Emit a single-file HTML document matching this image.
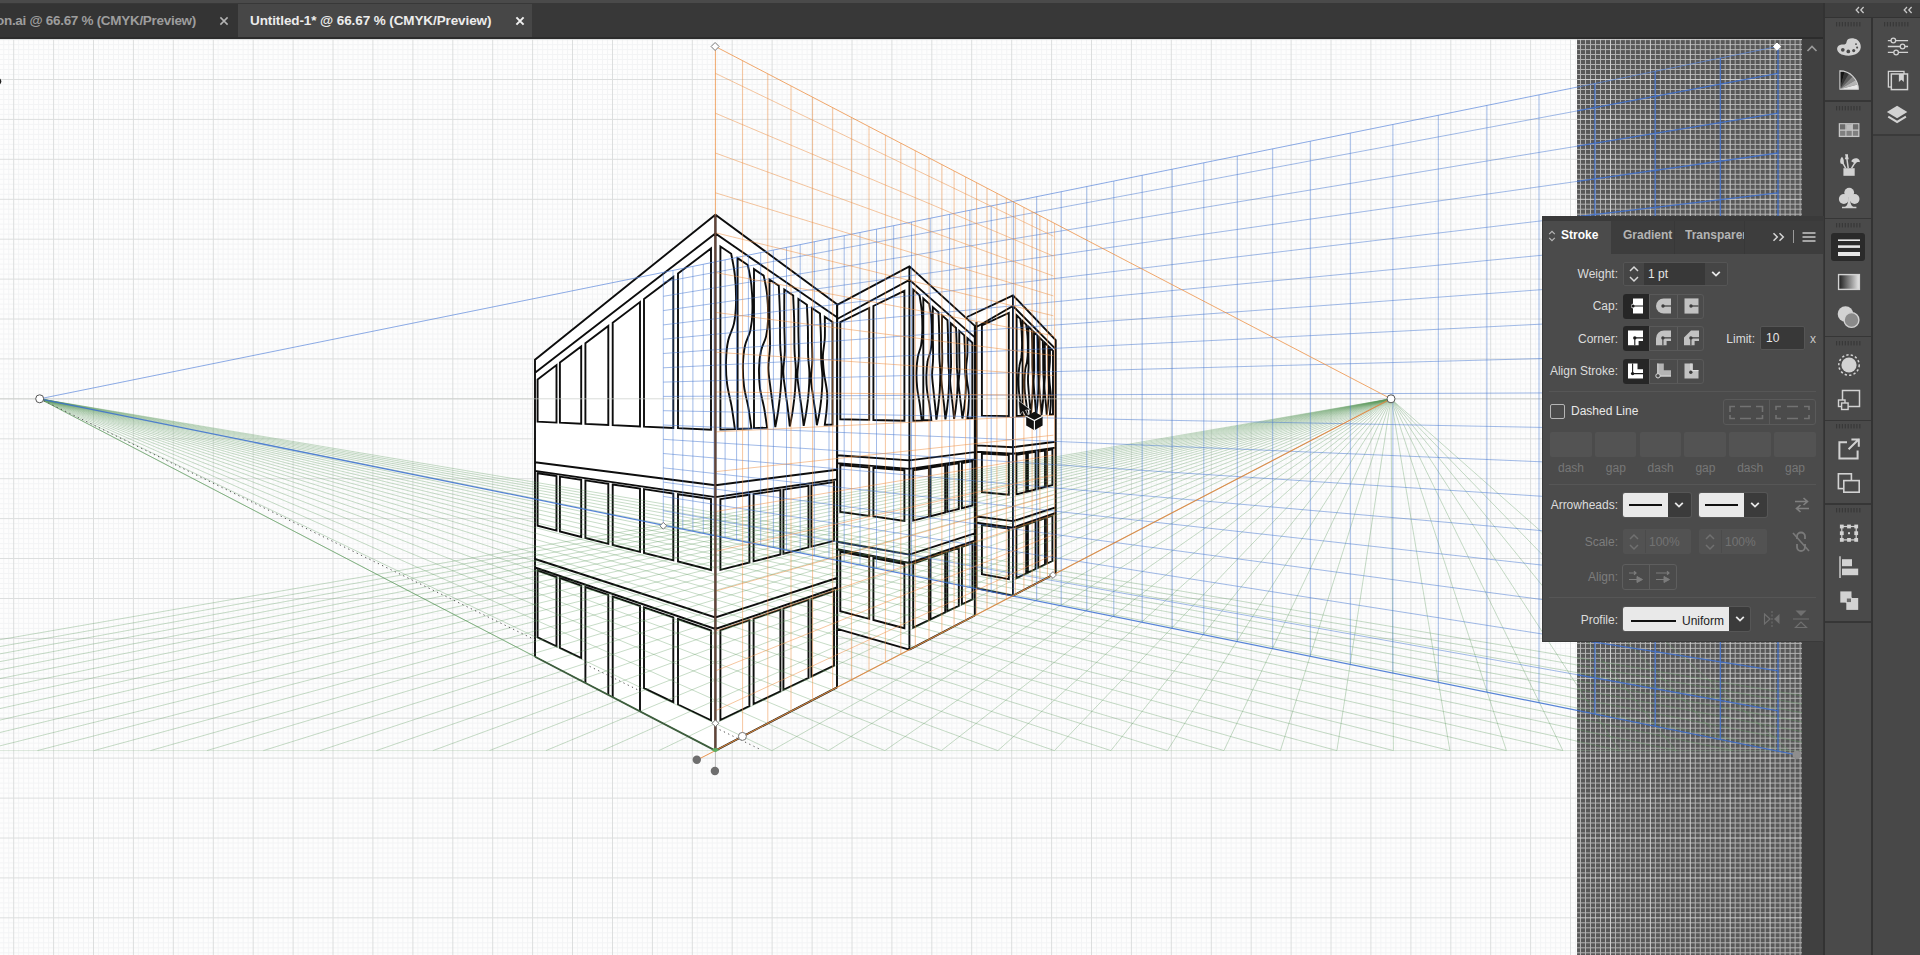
<!DOCTYPE html>
<html lang="en"><head><meta charset="utf-8"><title>Untitled-1* @ 66.67 % (CMYK/Preview)</title>
<style>
html,body{margin:0;padding:0}
body{width:1920px;height:955px;overflow:hidden;position:relative;background:#4a4a4a;
 font-family:"Liberation Sans",sans-serif;font-size:12px;color:#ddd}
.cv{position:absolute;left:0;top:0}
.abs{position:absolute}
.topbar{left:0;top:0;width:1823px;height:39px;background:#383838}
.topstrip{left:0;top:0;width:1920px;height:3px;background:#4a4a4a}
.tab{top:4px;height:33px;line-height:34px;font-weight:bold;font-size:13.5px;letter-spacing:-0.1px;white-space:nowrap}
.tab span{position:absolute;top:0}
.panel{left:1543px;top:217px;width:280px;height:424px;background:#4b4b4b;box-shadow:0 0 0 1px #3a3a3a;overflow:hidden}
.ptabs{left:0;top:0;width:280px;height:38px;background:#3d3d3d}
.ptab{top:5px;height:33px;line-height:29px;font-weight:bold;font-size:12px;white-space:nowrap}
.lbl{white-space:nowrap;text-align:right;width:121px;line-height:16px;height:16px;font-size:12px;color:#dcdcdc}
.dis{color:#7d7d7d}
.sep{left:6px;width:267px;height:1px;background:#565656}
.grp{border:1px solid #595959;border-radius:3px;box-sizing:border-box}
.fld{background:#3b3b3b;border:1px solid #555;box-sizing:border-box;border-radius:2px}
.dfld{background:#535353;border-radius:2px}
.dl{font-size:12px;color:#777;text-align:center;width:42px;line-height:14px}
.rcol{background:#4a4a4a}
</style></head><body>
<svg class="cv" width="1802" height="955" viewBox="0 0 1802 955">
<defs><clipPath id="ab"><rect x="0" y="39" width="1577.2" height="916"/></clipPath><clipPath id="pb"><rect x="1577.2" y="39" width="224.8" height="916"/></clipPath><clipPath id="cv"><rect x="0" y="39" width="1802" height="916"/></clipPath></defs>
<rect x="0" y="39" width="1577.2" height="916" fill="#fdfdfd"/>
<rect x="1577.2" y="39" width="224.8" height="916" fill="#585858"/>
<g clip-path="url(#ab)" fill="none"><path d="M3.7 39V955M8.7 39V955M18.6 39V955M23.6 39V955M28.6 39V955M33.6 39V955M38.6 39V955M43.6 39V955M48.6 39V955M58.6 39V955M63.6 39V955M68.5 39V955M73.5 39V955M78.5 39V955M83.5 39V955M88.5 39V955M98.5 39V955M103.5 39V955M108.5 39V955M113.5 39V955M118.5 39V955M123.4 39V955M128.4 39V955M138.4 39V955M143.4 39V955M148.4 39V955M153.4 39V955M158.4 39V955M163.4 39V955M168.4 39V955M178.3 39V955M183.3 39V955M188.3 39V955M193.3 39V955M198.3 39V955M203.3 39V955M208.3 39V955M218.2 39V955M223.2 39V955M228.2 39V955M233.2 39V955M238.2 39V955M243.2 39V955M248.2 39V955M258.2 39V955M263.2 39V955M268.1 39V955M273.1 39V955M278.1 39V955M283.1 39V955M288.1 39V955M298.1 39V955M303.1 39V955M308.1 39V955M313.1 39V955M318.1 39V955M323 39V955M328 39V955M338 39V955M343 39V955M348 39V955M353 39V955M358 39V955M363 39V955M367.9 39V955M377.9 39V955M382.9 39V955M387.9 39V955M392.9 39V955M397.9 39V955M402.9 39V955M407.9 39V955M417.9 39V955M422.8 39V955M427.8 39V955M432.8 39V955M437.8 39V955M442.8 39V955M447.8 39V955M457.8 39V955M462.8 39V955M467.8 39V955M472.7 39V955M477.7 39V955M482.7 39V955M487.7 39V955M497.7 39V955M502.7 39V955M507.7 39V955M512.7 39V955M517.7 39V955M522.6 39V955M527.6 39V955M537.6 39V955M542.6 39V955M547.6 39V955M552.6 39V955M557.6 39V955M562.6 39V955M567.5 39V955M577.5 39V955M582.5 39V955M587.5 39V955M592.5 39V955M597.5 39V955M602.5 39V955M607.5 39V955M617.5 39V955M622.4 39V955M627.4 39V955M632.4 39V955M637.4 39V955M642.4 39V955M647.4 39V955M657.4 39V955M662.4 39V955M667.4 39V955M672.3 39V955M677.3 39V955M682.3 39V955M687.3 39V955M697.3 39V955M702.3 39V955M707.3 39V955M712.3 39V955M717.2 39V955M722.2 39V955M727.2 39V955M737.2 39V955M742.2 39V955M747.2 39V955M752.2 39V955M757.2 39V955M762.2 39V955M767.1 39V955M777.1 39V955M782.1 39V955M787.1 39V955M792.1 39V955M797.1 39V955M802.1 39V955M807.1 39V955M817.1 39V955M822 39V955M827 39V955M832 39V955M837 39V955M842 39V955M847 39V955M857 39V955M862 39V955M867 39V955M871.9 39V955M876.9 39V955M881.9 39V955M886.9 39V955M896.9 39V955M901.9 39V955M906.9 39V955M911.9 39V955M916.9 39V955M921.8 39V955M926.8 39V955M936.8 39V955M941.8 39V955M946.8 39V955M951.8 39V955M956.8 39V955M961.8 39V955M966.8 39V955M976.7 39V955M981.7 39V955M986.7 39V955M991.7 39V955M996.7 39V955M1001.7 39V955M1006.7 39V955M1016.7 39V955M1021.6 39V955M1026.6 39V955M1031.6 39V955M1036.6 39V955M1041.6 39V955M1046.6 39V955M1056.6 39V955M1061.6 39V955M1066.6 39V955M1071.5 39V955M1076.5 39V955M1081.5 39V955M1086.5 39V955M1096.5 39V955M1101.5 39V955M1106.5 39V955M1111.5 39V955M1116.5 39V955M1121.4 39V955M1126.4 39V955M1136.4 39V955M1141.4 39V955M1146.4 39V955M1151.4 39V955M1156.4 39V955M1161.4 39V955M1166.4 39V955M1176.3 39V955M1181.3 39V955M1186.3 39V955M1191.3 39V955M1196.3 39V955M1201.3 39V955M1206.3 39V955M1216.2 39V955M1221.2 39V955M1226.2 39V955M1231.2 39V955M1236.2 39V955M1241.2 39V955M1246.2 39V955M1256.2 39V955M1261.2 39V955M1266.2 39V955M1271.1 39V955M1276.1 39V955M1281.1 39V955M1286.1 39V955M1296.1 39V955M1301.1 39V955M1306.1 39V955M1311.1 39V955M1316 39V955M1321 39V955M1326 39V955M1336 39V955M1341 39V955M1346 39V955M1351 39V955M1356 39V955M1361 39V955M1366 39V955M1375.9 39V955M1380.9 39V955M1385.9 39V955M1390.9 39V955M1395.9 39V955M1400.9 39V955M1405.9 39V955M1415.9 39V955M1420.8 39V955M1425.8 39V955M1430.8 39V955M1435.8 39V955M1440.8 39V955M1445.8 39V955M1455.8 39V955M1460.8 39V955M1465.8 39V955M1470.7 39V955M1475.7 39V955M1480.7 39V955M1485.7 39V955M1495.7 39V955M1500.7 39V955M1505.7 39V955M1510.7 39V955M1515.7 39V955M1520.6 39V955M1525.6 39V955M1535.6 39V955M1540.6 39V955M1545.6 39V955M1550.6 39V955M1555.6 39V955M1560.6 39V955M1565.5 39V955M1575.5 39V955M1580.5 39V955M1585.5 39V955M1590.5 39V955M1595.5 39V955M1600.5 39V955M1605.5 39V955M1615.5 39V955M1620.4 39V955M1625.4 39V955M1630.4 39V955M1635.4 39V955M1640.4 39V955M1645.4 39V955M1655.4 39V955M1660.4 39V955M1665.4 39V955M1670.3 39V955M1675.3 39V955M1680.3 39V955M1685.3 39V955M1695.3 39V955M1700.3 39V955M1705.3 39V955M1710.3 39V955M1715.2 39V955M1720.2 39V955M1725.2 39V955M1735.2 39V955M1740.2 39V955M1745.2 39V955M1750.2 39V955M1755.2 39V955M1760.2 39V955M1765.2 39V955M1775.1 39V955M1780.1 39V955M1785.1 39V955M1790.1 39V955M1795.1 39V955M1800.1 39V955M0 44.6H1802M0 49.6H1802M0 54.5H1802M0 59.5H1802M0 64.5H1802M0 69.5H1802M0 74.5H1802M0 84.5H1802M0 89.5H1802M0 94.5H1802M0 99.5H1802M0 104.5H1802M0 109.4H1802M0 114.4H1802M0 124.4H1802M0 129.4H1802M0 134.4H1802M0 139.4H1802M0 144.4H1802M0 149.4H1802M0 154.4H1802M0 164.3H1802M0 169.3H1802M0 174.3H1802M0 179.3H1802M0 184.3H1802M0 189.3H1802M0 194.3H1802M0 204.2H1802M0 209.2H1802M0 214.2H1802M0 219.2H1802M0 224.2H1802M0 229.2H1802M0 234.2H1802M0 244.2H1802M0 249.2H1802M0 254.2H1802M0 259.1H1802M0 264.1H1802M0 269.1H1802M0 274.1H1802M0 284.1H1802M0 289.1H1802M0 294.1H1802M0 299.1H1802M0 304.1H1802M0 309H1802M0 314H1802M0 324H1802M0 329H1802M0 334H1802M0 339H1802M0 344H1802M0 349H1802M0 353.9H1802M0 363.9H1802M0 368.9H1802M0 373.9H1802M0 378.9H1802M0 383.9H1802M0 388.9H1802M0 393.9H1802M0 403.9H1802M0 408.8H1802M0 413.8H1802M0 418.8H1802M0 423.8H1802M0 428.8H1802M0 433.8H1802M0 443.8H1802M0 448.8H1802M0 453.8H1802M0 458.7H1802M0 463.7H1802M0 468.7H1802M0 473.7H1802M0 483.7H1802M0 488.7H1802M0 493.7H1802M0 498.7H1802M0 503.7H1802M0 508.6H1802M0 513.6H1802M0 523.6H1802M0 528.6H1802M0 533.6H1802M0 538.6H1802M0 543.6H1802M0 548.6H1802M0 553.5H1802M0 563.5H1802M0 568.5H1802M0 573.5H1802M0 578.5H1802M0 583.5H1802M0 588.5H1802M0 593.5H1802M0 603.5H1802M0 608.4H1802M0 613.4H1802M0 618.4H1802M0 623.4H1802M0 628.4H1802M0 633.4H1802M0 643.4H1802M0 648.4H1802M0 653.4H1802M0 658.3H1802M0 663.3H1802M0 668.3H1802M0 673.3H1802M0 683.3H1802M0 688.3H1802M0 693.3H1802M0 698.3H1802M0 703.2H1802M0 708.2H1802M0 713.2H1802M0 723.2H1802M0 728.2H1802M0 733.2H1802M0 738.2H1802M0 743.2H1802M0 748.2H1802M0 753.1H1802M0 763.1H1802M0 768.1H1802M0 773.1H1802M0 778.1H1802M0 783.1H1802M0 788.1H1802M0 793.1H1802M0 803.1H1802M0 808H1802M0 813H1802M0 818H1802M0 823H1802M0 828H1802M0 833H1802M0 843H1802M0 848H1802M0 853H1802M0 857.9H1802M0 862.9H1802M0 867.9H1802M0 872.9H1802M0 882.9H1802M0 887.9H1802M0 892.9H1802M0 897.9H1802M0 902.9H1802M0 907.8H1802M0 912.8H1802M0 922.8H1802M0 927.8H1802M0 932.8H1802M0 937.8H1802M0 942.8H1802M0 947.8H1802M0 952.8H1802" stroke="#f3f4f5"/><path d="M13.7 39V955M53.6 39V955M93.5 39V955M133.4 39V955M173.3 39V955M213.3 39V955M253.2 39V955M293.1 39V955M333 39V955M372.9 39V955M412.9 39V955M452.8 39V955M492.7 39V955M532.6 39V955M572.5 39V955M612.5 39V955M652.4 39V955M692.3 39V955M732.2 39V955M772.1 39V955M812.1 39V955M852 39V955M891.9 39V955M931.8 39V955M971.7 39V955M1011.7 39V955M1051.6 39V955M1091.5 39V955M1131.4 39V955M1171.3 39V955M1211.3 39V955M1251.2 39V955M1291.1 39V955M1331 39V955M1370.9 39V955M1410.9 39V955M1450.8 39V955M1490.7 39V955M1530.6 39V955M1570.5 39V955M1610.5 39V955M1650.4 39V955M1690.3 39V955M1730.2 39V955M1770.1 39V955M0 39.6H1802M0 79.5H1802M0 119.4H1802M0 159.3H1802M0 199.3H1802M0 239.2H1802M0 279.1H1802M0 319H1802M0 358.9H1802M0 398.9H1802M0 438.8H1802M0 478.7H1802M0 518.6H1802M0 558.5H1802M0 598.5H1802M0 638.4H1802M0 678.3H1802M0 718.2H1802M0 758.1H1802M0 798.1H1802M0 838H1802M0 877.9H1802M0 917.8H1802" stroke="#dcdede"/></g>
<g clip-path="url(#pb)" fill="none"><path d="M3.7 39V955M8.7 39V955M18.6 39V955M23.6 39V955M28.6 39V955M33.6 39V955M38.6 39V955M43.6 39V955M48.6 39V955M58.6 39V955M63.6 39V955M68.5 39V955M73.5 39V955M78.5 39V955M83.5 39V955M88.5 39V955M98.5 39V955M103.5 39V955M108.5 39V955M113.5 39V955M118.5 39V955M123.4 39V955M128.4 39V955M138.4 39V955M143.4 39V955M148.4 39V955M153.4 39V955M158.4 39V955M163.4 39V955M168.4 39V955M178.3 39V955M183.3 39V955M188.3 39V955M193.3 39V955M198.3 39V955M203.3 39V955M208.3 39V955M218.2 39V955M223.2 39V955M228.2 39V955M233.2 39V955M238.2 39V955M243.2 39V955M248.2 39V955M258.2 39V955M263.2 39V955M268.1 39V955M273.1 39V955M278.1 39V955M283.1 39V955M288.1 39V955M298.1 39V955M303.1 39V955M308.1 39V955M313.1 39V955M318.1 39V955M323 39V955M328 39V955M338 39V955M343 39V955M348 39V955M353 39V955M358 39V955M363 39V955M367.9 39V955M377.9 39V955M382.9 39V955M387.9 39V955M392.9 39V955M397.9 39V955M402.9 39V955M407.9 39V955M417.9 39V955M422.8 39V955M427.8 39V955M432.8 39V955M437.8 39V955M442.8 39V955M447.8 39V955M457.8 39V955M462.8 39V955M467.8 39V955M472.7 39V955M477.7 39V955M482.7 39V955M487.7 39V955M497.7 39V955M502.7 39V955M507.7 39V955M512.7 39V955M517.7 39V955M522.6 39V955M527.6 39V955M537.6 39V955M542.6 39V955M547.6 39V955M552.6 39V955M557.6 39V955M562.6 39V955M567.5 39V955M577.5 39V955M582.5 39V955M587.5 39V955M592.5 39V955M597.5 39V955M602.5 39V955M607.5 39V955M617.5 39V955M622.4 39V955M627.4 39V955M632.4 39V955M637.4 39V955M642.4 39V955M647.4 39V955M657.4 39V955M662.4 39V955M667.4 39V955M672.3 39V955M677.3 39V955M682.3 39V955M687.3 39V955M697.3 39V955M702.3 39V955M707.3 39V955M712.3 39V955M717.2 39V955M722.2 39V955M727.2 39V955M737.2 39V955M742.2 39V955M747.2 39V955M752.2 39V955M757.2 39V955M762.2 39V955M767.1 39V955M777.1 39V955M782.1 39V955M787.1 39V955M792.1 39V955M797.1 39V955M802.1 39V955M807.1 39V955M817.1 39V955M822 39V955M827 39V955M832 39V955M837 39V955M842 39V955M847 39V955M857 39V955M862 39V955M867 39V955M871.9 39V955M876.9 39V955M881.9 39V955M886.9 39V955M896.9 39V955M901.9 39V955M906.9 39V955M911.9 39V955M916.9 39V955M921.8 39V955M926.8 39V955M936.8 39V955M941.8 39V955M946.8 39V955M951.8 39V955M956.8 39V955M961.8 39V955M966.8 39V955M976.7 39V955M981.7 39V955M986.7 39V955M991.7 39V955M996.7 39V955M1001.7 39V955M1006.7 39V955M1016.7 39V955M1021.6 39V955M1026.6 39V955M1031.6 39V955M1036.6 39V955M1041.6 39V955M1046.6 39V955M1056.6 39V955M1061.6 39V955M1066.6 39V955M1071.5 39V955M1076.5 39V955M1081.5 39V955M1086.5 39V955M1096.5 39V955M1101.5 39V955M1106.5 39V955M1111.5 39V955M1116.5 39V955M1121.4 39V955M1126.4 39V955M1136.4 39V955M1141.4 39V955M1146.4 39V955M1151.4 39V955M1156.4 39V955M1161.4 39V955M1166.4 39V955M1176.3 39V955M1181.3 39V955M1186.3 39V955M1191.3 39V955M1196.3 39V955M1201.3 39V955M1206.3 39V955M1216.2 39V955M1221.2 39V955M1226.2 39V955M1231.2 39V955M1236.2 39V955M1241.2 39V955M1246.2 39V955M1256.2 39V955M1261.2 39V955M1266.2 39V955M1271.1 39V955M1276.1 39V955M1281.1 39V955M1286.1 39V955M1296.1 39V955M1301.1 39V955M1306.1 39V955M1311.1 39V955M1316 39V955M1321 39V955M1326 39V955M1336 39V955M1341 39V955M1346 39V955M1351 39V955M1356 39V955M1361 39V955M1366 39V955M1375.9 39V955M1380.9 39V955M1385.9 39V955M1390.9 39V955M1395.9 39V955M1400.9 39V955M1405.9 39V955M1415.9 39V955M1420.8 39V955M1425.8 39V955M1430.8 39V955M1435.8 39V955M1440.8 39V955M1445.8 39V955M1455.8 39V955M1460.8 39V955M1465.8 39V955M1470.7 39V955M1475.7 39V955M1480.7 39V955M1485.7 39V955M1495.7 39V955M1500.7 39V955M1505.7 39V955M1510.7 39V955M1515.7 39V955M1520.6 39V955M1525.6 39V955M1535.6 39V955M1540.6 39V955M1545.6 39V955M1550.6 39V955M1555.6 39V955M1560.6 39V955M1565.5 39V955M1575.5 39V955M1580.5 39V955M1585.5 39V955M1590.5 39V955M1595.5 39V955M1600.5 39V955M1605.5 39V955M1615.5 39V955M1620.4 39V955M1625.4 39V955M1630.4 39V955M1635.4 39V955M1640.4 39V955M1645.4 39V955M1655.4 39V955M1660.4 39V955M1665.4 39V955M1670.3 39V955M1675.3 39V955M1680.3 39V955M1685.3 39V955M1695.3 39V955M1700.3 39V955M1705.3 39V955M1710.3 39V955M1715.2 39V955M1720.2 39V955M1725.2 39V955M1735.2 39V955M1740.2 39V955M1745.2 39V955M1750.2 39V955M1755.2 39V955M1760.2 39V955M1765.2 39V955M1775.1 39V955M1780.1 39V955M1785.1 39V955M1790.1 39V955M1795.1 39V955M1800.1 39V955M0 44.6H1802M0 49.6H1802M0 54.5H1802M0 59.5H1802M0 64.5H1802M0 69.5H1802M0 74.5H1802M0 84.5H1802M0 89.5H1802M0 94.5H1802M0 99.5H1802M0 104.5H1802M0 109.4H1802M0 114.4H1802M0 124.4H1802M0 129.4H1802M0 134.4H1802M0 139.4H1802M0 144.4H1802M0 149.4H1802M0 154.4H1802M0 164.3H1802M0 169.3H1802M0 174.3H1802M0 179.3H1802M0 184.3H1802M0 189.3H1802M0 194.3H1802M0 204.2H1802M0 209.2H1802M0 214.2H1802M0 219.2H1802M0 224.2H1802M0 229.2H1802M0 234.2H1802M0 244.2H1802M0 249.2H1802M0 254.2H1802M0 259.1H1802M0 264.1H1802M0 269.1H1802M0 274.1H1802M0 284.1H1802M0 289.1H1802M0 294.1H1802M0 299.1H1802M0 304.1H1802M0 309H1802M0 314H1802M0 324H1802M0 329H1802M0 334H1802M0 339H1802M0 344H1802M0 349H1802M0 353.9H1802M0 363.9H1802M0 368.9H1802M0 373.9H1802M0 378.9H1802M0 383.9H1802M0 388.9H1802M0 393.9H1802M0 403.9H1802M0 408.8H1802M0 413.8H1802M0 418.8H1802M0 423.8H1802M0 428.8H1802M0 433.8H1802M0 443.8H1802M0 448.8H1802M0 453.8H1802M0 458.7H1802M0 463.7H1802M0 468.7H1802M0 473.7H1802M0 483.7H1802M0 488.7H1802M0 493.7H1802M0 498.7H1802M0 503.7H1802M0 508.6H1802M0 513.6H1802M0 523.6H1802M0 528.6H1802M0 533.6H1802M0 538.6H1802M0 543.6H1802M0 548.6H1802M0 553.5H1802M0 563.5H1802M0 568.5H1802M0 573.5H1802M0 578.5H1802M0 583.5H1802M0 588.5H1802M0 593.5H1802M0 603.5H1802M0 608.4H1802M0 613.4H1802M0 618.4H1802M0 623.4H1802M0 628.4H1802M0 633.4H1802M0 643.4H1802M0 648.4H1802M0 653.4H1802M0 658.3H1802M0 663.3H1802M0 668.3H1802M0 673.3H1802M0 683.3H1802M0 688.3H1802M0 693.3H1802M0 698.3H1802M0 703.2H1802M0 708.2H1802M0 713.2H1802M0 723.2H1802M0 728.2H1802M0 733.2H1802M0 738.2H1802M0 743.2H1802M0 748.2H1802M0 753.1H1802M0 763.1H1802M0 768.1H1802M0 773.1H1802M0 778.1H1802M0 783.1H1802M0 788.1H1802M0 793.1H1802M0 803.1H1802M0 808H1802M0 813H1802M0 818H1802M0 823H1802M0 828H1802M0 833H1802M0 843H1802M0 848H1802M0 853H1802M0 857.9H1802M0 862.9H1802M0 867.9H1802M0 872.9H1802M0 882.9H1802M0 887.9H1802M0 892.9H1802M0 897.9H1802M0 902.9H1802M0 907.8H1802M0 912.8H1802M0 922.8H1802M0 927.8H1802M0 932.8H1802M0 937.8H1802M0 942.8H1802M0 947.8H1802M0 952.8H1802" stroke="#b2b2b2"/><path d="M13.7 39V955M53.6 39V955M93.5 39V955M133.4 39V955M173.3 39V955M213.3 39V955M253.2 39V955M293.1 39V955M333 39V955M372.9 39V955M412.9 39V955M452.8 39V955M492.7 39V955M532.6 39V955M572.5 39V955M612.5 39V955M652.4 39V955M692.3 39V955M732.2 39V955M772.1 39V955M812.1 39V955M852 39V955M891.9 39V955M931.8 39V955M971.7 39V955M1011.7 39V955M1051.6 39V955M1091.5 39V955M1131.4 39V955M1171.3 39V955M1211.3 39V955M1251.2 39V955M1291.1 39V955M1331 39V955M1370.9 39V955M1410.9 39V955M1450.8 39V955M1490.7 39V955M1530.6 39V955M1570.5 39V955M1610.5 39V955M1650.4 39V955M1690.3 39V955M1730.2 39V955M1770.1 39V955M0 39.6H1802M0 79.5H1802M0 119.4H1802M0 159.3H1802M0 199.3H1802M0 239.2H1802M0 279.1H1802M0 319H1802M0 358.9H1802M0 398.9H1802M0 438.8H1802M0 478.7H1802M0 518.6H1802M0 558.5H1802M0 598.5H1802M0 638.4H1802M0 678.3H1802M0 718.2H1802M0 758.1H1802M0 798.1H1802M0 838H1802M0 877.9H1802M0 917.8H1802" stroke="#cecece"/></g>
<path d="M535 359.8L715.4 214.7L837 304.2L837 687.3L715.4 750.6L535 656.7ZM837.2 304.9L909.4 266.3L974.8 325.9L974.8 615.5L909.4 649.6L837.2 628.8ZM976.5 316.5L1013 295.3L1055.7 340.1L1055.7 573.4L1013 595.6L976.5 588.3Z" fill="#fff"/>
<path d="M535 656.7L535 359.8L715.4 214.7L837 304.2L837 687.3M715.4 214.7L715.4 750.6M535 372.7L715.4 233.5L837 317.3M715.4 750.6L837 687.3M535 462.2L715.4 485.3L837 469.7M535 470.9L715.4 497.1L837 479.4M535 559L715.4 617.4L837 578M535 567.5L715.4 629L837 587.5M537.6 379.4L556.5 365.1L556.5 422.6L537.6 421.7ZM537.6 473.2L556.5 476.1L556.5 530.6L537.6 525.7ZM537.6 570.6L556.5 577.1L556.5 646.3L537.6 637.3ZM559.9 362.6L581.2 346.5L581.2 423.7L559.9 422.7ZM559.9 476.6L581.2 479.7L581.2 536.9L559.9 531.4ZM559.9 578.2L581.2 585.6L581.2 658.1L559.9 647.9ZM585.4 343.3L608.3 326L608.3 425L585.4 423.9ZM585.4 480.4L608.3 483.8L608.3 543.8L585.4 537.9ZM585.4 682.9L585.4 587L608.3 594.9L608.3 694.8M612.7 322.7L640 302.1L640 426.4L612.7 425.2ZM612.7 484.5L640 488.5L640 551.9L612.7 544.9ZM612.7 697.1L612.7 596.5L640 605.9L640 711.3M644 299.1L673.3 277L673.3 427.9L644 426.6ZM644 489.1L673.3 493.5L673.3 560.3L644 552.9ZM644 607.3L673.3 617.4L673.3 702.2L644 688.2ZM678 273.4L711 248.5L711 429.7L678 428.2ZM678 494.2L711 499.1L711 570L678 561.5ZM678 619L711 630.4L711 720.3L678 704.5ZM720.4 499.1L749.4 494.7L749.4 562.4L720.4 569.8ZM720.4 630.2L749.4 620.2L749.4 706.1L720.4 720ZM753.6 494.1L780.4 490.1L780.4 554.5L753.6 561.3ZM753.6 618.7L780.4 609.5L780.4 691.3L753.6 704.1ZM783.4 489.6L808.5 485.9L808.5 547.3L783.4 553.7ZM783.4 608.4L808.5 599.8L808.5 677.8L783.4 689.8ZM811.4 485.5L834 482.1L834 540.8L811.4 546.6ZM811.4 598.8L834 591L834 665.6L811.4 676.4ZM720.4 246.5L731.2 253.7C731.8 257.4 734.1 267.2 734.9 275.5C735.8 283.8 736.2 295.7 736 303.7C735.8 311.8 735.2 317.8 733.9 323.9C732.6 330 729.5 334.3 728.2 340.5C726.8 346.7 726.2 354.1 726 361.3C725.8 368.6 726.1 376.4 727.1 383.9C728 391.4 730.3 398.8 731.6 406.3C732.9 413.9 734.4 425.4 734.9 429.2L720.4 429.6ZM737.6 258.1L747.8 265C748.4 268.3 750.7 277.5 751.4 285.2C752.2 293 752.6 304 752.4 311.5C752.3 319.1 751.6 324.6 750.4 330.3C749.2 336 746.2 340 745 345.8C743.7 351.6 743.1 358.4 742.9 365.2C742.8 371.9 743.1 379.2 744 386.2C744.8 393.2 747 400.1 748.3 407.1C749.5 414.2 750.9 424.8 751.4 428.4L737.6 428.9ZM754 269.1L763.7 275.6C764.3 278.8 766.4 287.2 767.1 294.5C767.8 301.7 768.2 312 768.1 318.9C767.9 325.9 767.3 331.1 766.1 336.4C764.9 341.7 762.2 345.4 761 350.8C759.8 356.2 759.2 362.6 759 368.8C758.9 375.1 759.2 381.9 760 388.4C760.8 394.9 762.9 401.3 764.1 407.9C765.3 414.4 766.6 424.4 767.1 427.7L754 428.1ZM769.5 279.5L778.8 285.8C779 290.5 779.7 304.1 779.9 314C780.1 323.9 779.9 336.6 780.2 345.1C780.4 353.5 781.4 357.8 781.6 364.8C781.7 371.9 781.4 379.9 780.8 387.4C780.3 395 779.2 403.4 778.3 410C777.4 416.6 775.8 424.3 775.3 427.1C774.9 424.2 774.2 416.1 773.4 409.8C772.6 403.5 771.5 396 770.6 389.1C769.8 382.2 768.5 375.4 768.4 368.2C768.3 361.1 769.8 354.9 770 346.2C770.2 337.6 769.6 327.6 769.5 316.5C769.4 305.4 769.5 285.7 769.5 279.5ZM784.3 289.5L793.2 295.4C793.3 299.8 794 312.4 794.2 321.6C794.4 330.8 794.2 342.5 794.5 350.4C794.7 358.3 795.7 362.2 795.8 368.7C795.9 375.3 795.6 382.7 795.1 389.7C794.6 396.6 793.6 404.4 792.7 410.6C791.8 416.7 790.3 423.8 789.8 426.5C789.5 423.8 788.8 416.3 788 410.4C787.3 404.5 786.2 397.6 785.4 391.2C784.6 384.8 783.4 378.5 783.3 371.8C783.2 365.2 784.6 359.4 784.8 351.4C784.9 343.4 784.4 334.1 784.3 323.8C784.2 313.5 784.3 295.2 784.3 289.5ZM798.4 299L806.9 304.7C807 308.7 807.7 320.4 807.9 328.9C808.1 337.3 807.9 348.2 808.1 355.5C808.4 362.7 809.3 366.4 809.4 372.4C809.5 378.5 809.2 385.3 808.7 391.8C808.2 398.2 807.3 405.5 806.4 411.1C805.6 416.8 804.1 423.4 803.7 425.8C803.4 423.3 802.7 416.4 802 411C801.3 405.5 800.2 399.1 799.5 393.2C798.7 387.2 797.5 381.4 797.4 375.2C797.3 369.1 798.7 363.7 798.9 356.3C799 348.9 798.5 340.3 798.4 330.8C798.4 321.2 798.4 304.3 798.4 299ZM811.9 308.1L820 313.5C820.1 317.2 820.7 328 820.9 335.8C821.1 343.6 820.9 353.6 821.2 360.3C821.4 367 822.3 370.4 822.4 376C822.5 381.5 822.2 387.9 821.7 393.8C821.3 399.8 820.4 406.4 819.6 411.7C818.8 416.9 817.4 422.9 816.9 425.2C816.6 422.9 816 416.5 815.3 411.5C814.6 406.5 813.6 400.6 812.9 395.1C812.2 389.6 811 384.2 811 378.5C810.9 372.8 812.2 367.9 812.3 361C812.5 354.2 812 346.2 811.9 337.4C811.9 328.6 811.9 312.9 811.9 308.1ZM824.8 316.7L832.5 321.9L832.5 424.5L824.8 424.8C825.1 422.2 826.3 414.1 826.7 408.7C827.1 403.4 827.6 398.8 827.1 392.8C826.7 386.8 824.7 379.1 824 372.9C823.3 366.8 822.7 361.4 822.9 355.6C823 349.9 824.5 344.8 824.8 338.3C825.1 331.9 824.8 320.3 824.8 316.7ZM837.2 628.8L837.2 304.9L909.4 266.3L974.8 325.9L974.8 615.5M909.4 266.3L909.4 649.6M837.2 319L909.4 279.8L974.8 337.4M837.2 628.8L909.4 649.6M909.4 649.6L974.8 615.5M837.2 455.3L909.4 460.4L974.8 452.1M837.2 463.1L909.4 468.9L974.8 459.4M837.2 541.7L909.4 554.6L974.8 533.4M837.2 549.3L909.4 562.9L974.8 540.6M840.3 322.2L869.2 308L869.2 419.9L840.3 419.2ZM840.3 465.1L869.2 467.5L869.2 515.9L840.3 511.9ZM840.3 551.8L869.2 557.3L869.2 618.8L840.3 611.2ZM873.4 306L904.4 290.8L904.4 420.8L873.4 420ZM873.4 467.8L904.4 470.4L904.4 520.9L873.4 516.5ZM873.4 558.1L904.4 564L904.4 628.2L873.4 619.9ZM913.2 470.2L928.9 467.9L928.9 516.6L913.2 520.6ZM913.2 563.6L928.9 558.2L928.9 620.1L913.2 627.7ZM930.5 467.6L945.2 465.4L945.2 512.5L930.5 516.2ZM930.5 557.7L945.2 552.6L945.2 612.3L930.5 619.4ZM947.3 465.1L958.8 463.4L958.8 509L947.3 511.9ZM947.3 551.9L958.8 547.9L958.8 605.8L947.3 611.3ZM961.9 463L972.4 461.4L972.4 505.5L961.9 508.2ZM961.9 546.8L972.4 543.2L972.4 599.3L961.9 604.3ZM913.3 289.6L919.5 295.2C919.9 297.8 921.2 304.8 921.7 310.7C922.2 316.7 922.4 325.1 922.3 330.9C922.2 336.7 921.8 340.9 921.1 345.3C920.3 349.7 918.5 352.7 917.8 357.1C917 361.5 916.6 366.8 916.5 371.9C916.4 377.1 916.6 382.7 917.2 388.1C917.7 393.5 919 398.8 919.8 404.2C920.5 409.6 921.4 417.8 921.7 420.5L913.3 420.8ZM923.3 298.5L929.2 303.9C929.6 306.3 930.9 312.8 931.3 318.3C931.8 323.8 932 331.7 931.9 337C931.8 342.3 931.4 346.3 930.7 350.4C930 354.4 928.3 357.2 927.6 361.3C926.8 365.4 926.5 370.2 926.4 375C926.3 379.8 926.4 385 927 390C927.5 395 928.7 399.9 929.5 404.9C930.2 410 931 417.5 931.3 420L923.3 420.3ZM932.8 307.1L938.5 312.3C938.6 315.8 939.1 326.2 939.2 333.7C939.4 341.3 939.2 350.9 939.4 357.4C939.6 363.8 940.2 367 940.3 372.4C940.3 377.7 940.1 383.8 939.8 389.6C939.5 395.3 938.8 401.7 938.2 406.7C937.7 411.7 936.7 417.5 936.4 419.7C936.2 417.5 935.7 411.3 935.2 406.5C934.7 401.7 934 396 933.5 390.7C933 385.4 932.2 380.2 932.1 374.8C932.1 369.3 933 364.6 933.1 358C933.2 351.4 932.9 343.8 932.8 335.3C932.8 326.8 932.8 311.8 932.8 307.1ZM942 315.4L947.5 320.3C947.6 323.6 948 333.2 948.1 340.1C948.3 347 948.1 355.9 948.3 361.8C948.5 367.8 949.1 370.7 949.1 375.7C949.2 380.6 949 386.2 948.7 391.5C948.4 396.8 947.8 402.7 947.2 407.3C946.7 411.9 945.7 417.3 945.4 419.3C945.2 417.3 944.7 411.6 944.3 407.1C943.8 402.7 943.1 397.4 942.6 392.5C942.1 387.6 941.4 382.8 941.3 377.8C941.2 372.8 942.1 368.4 942.2 362.3C942.4 356.3 942 349.2 942 341.4C941.9 333.6 942 319.7 942 315.4ZM950.8 323.3L956.1 328C956.2 331 956.6 339.8 956.7 346.2C956.8 352.5 956.7 360.7 956.9 366.2C957 371.6 957.6 374.3 957.7 378.9C957.7 383.4 957.5 388.5 957.2 393.4C956.9 398.2 956.3 403.6 955.8 407.9C955.3 412.1 954.4 417.1 954.1 418.9C953.9 417 953.4 411.8 953 407.7C952.6 403.6 951.9 398.8 951.4 394.3C950.9 389.8 950.2 385.4 950.1 380.7C950.1 376.1 950.9 372.1 951 366.5C951.2 360.9 950.8 354.4 950.8 347.2C950.7 340 950.8 327.3 950.8 323.3ZM959.3 330.9L964.3 335.4C964.4 338.2 964.8 346.2 965 352C965.1 357.9 965 365.3 965.1 370.3C965.3 375.3 965.8 377.8 965.9 381.9C965.9 386.1 965.8 390.8 965.5 395.2C965.2 399.6 964.6 404.6 964.1 408.5C963.6 412.3 962.7 416.8 962.4 418.5C962.2 416.8 961.8 412 961.4 408.3C961 404.5 960.3 400.1 959.9 396C959.4 391.8 958.7 387.8 958.6 383.5C958.6 379.3 959.4 375.6 959.5 370.5C959.6 365.4 959.3 359.4 959.3 352.8C959.2 346.2 959.3 334.5 959.3 330.9ZM967.4 338.2L972.3 342.6L972.3 418.1L967.4 418.3C967.6 416.3 968.4 410.3 968.6 406.4C968.9 402.4 969.2 399 968.9 394.6C968.6 390.2 967.4 384.4 966.9 379.8C966.5 375.2 966.1 371.3 966.2 367C966.3 362.8 967.2 359 967.4 354.2C967.6 349.4 967.4 340.9 967.4 338.2ZM976.5 588.3L976.5 322M967 317L1013 295.3L1055.7 340.1L1055.7 573.4M1013 295.3L1013 595.6M976.5 327L1013 306L1055.7 349.2M976.5 588.3L1013 595.6M1013 595.6L1055.7 573.4M976.5 445.4L1013 447.2L1055.7 441.7M976.5 451.7L1013 453.8L1055.7 447.6M976.5 516.5L1013 521.1L1055.7 507.3M976.5 522.8L1013 527.6L1055.7 513M981.9 325.4L1008.8 313L1008.8 416.1L981.9 415.6ZM981.9 453.5L1008.8 455.1L1008.8 494.8L981.9 492.1ZM981.9 525L1008.8 528.6L1008.8 579.1L981.9 574.1ZM1016.4 454.8L1026.2 453.3L1026.2 491.8L1016.4 494.3ZM1016.4 528L1026.2 524.7L1026.2 573.5L1016.4 578.2ZM1027.9 453.1L1035.6 451.9L1035.6 489.4L1027.9 491.4ZM1027.9 524.1L1035.6 521.4L1035.6 569L1027.9 572.7ZM1038.3 451.5L1045 450.5L1045 487L1038.3 488.7ZM1038.3 520.5L1045 518.2L1045 564.5L1038.3 567.7ZM1047.1 450.2L1052.4 449.4L1052.4 485.1L1047.1 486.5ZM1047.1 517.4L1052.4 515.6L1052.4 561L1047.1 563.5ZM1016.6 315.2L1020.3 318.9C1020.6 320.9 1021.4 326.3 1021.6 330.9C1021.9 335.5 1022.1 342 1022 346.5C1022 351 1021.7 354.3 1021.3 357.7C1020.8 361 1019.7 363.4 1019.3 366.9C1018.8 370.3 1018.6 374.4 1018.5 378.4C1018.5 382.4 1018.6 386.7 1018.9 390.8C1019.2 395 1020 399.1 1020.5 403.2C1020.9 407.4 1021.5 413.7 1021.6 415.9L1016.6 416ZM1022.6 321.1L1026.2 324.6C1026.4 326.5 1027.2 331.6 1027.5 335.9C1027.8 340.2 1027.9 346.3 1027.8 350.5C1027.8 354.7 1027.6 357.8 1027.1 361C1026.7 364.2 1025.6 366.4 1025.2 369.6C1024.8 372.9 1024.5 376.7 1024.5 380.4C1024.4 384.2 1024.5 388.2 1024.8 392.1C1025.2 396 1025.9 399.8 1026.4 403.8C1026.8 407.7 1027.3 413.6 1027.5 415.6L1022.6 415.7ZM1028.4 326.7L1031.9 330.2C1032 333 1032.2 341.2 1032.3 347.2C1032.4 353.2 1032.3 360.8 1032.4 365.9C1032.5 371 1032.9 373.6 1033 377.9C1033 382.1 1032.9 386.9 1032.7 391.5C1032.5 396 1032.1 401.1 1031.7 405.1C1031.4 409.1 1030.8 413.7 1030.6 415.4C1030.5 413.6 1030.2 408.8 1029.9 404.9C1029.6 401.1 1029.1 396.7 1028.8 392.5C1028.5 388.3 1028 384.3 1028 380C1027.9 375.7 1028.5 371.9 1028.6 366.8C1028.6 361.6 1028.4 355.6 1028.4 348.9C1028.4 342.3 1028.4 330.4 1028.4 326.7ZM1034 332.2L1037.4 335.6C1037.5 338.2 1037.7 345.9 1037.8 351.5C1037.9 357 1037.8 364.2 1037.9 369C1038 373.7 1038.4 376.1 1038.4 380.1C1038.5 384.1 1038.4 388.6 1038.2 392.8C1038 397 1037.6 401.8 1037.3 405.5C1036.9 409.2 1036.3 413.5 1036.1 415.1C1036 413.5 1035.7 408.9 1035.4 405.4C1035.2 401.8 1034.7 397.6 1034.4 393.7C1034.1 389.8 1033.7 386 1033.6 382C1033.6 378 1034.1 374.5 1034.2 369.7C1034.3 364.8 1034.1 359.2 1034 353C1034 346.7 1034 335.7 1034 332.2ZM1039.5 337.6L1042.8 340.8C1042.8 343.3 1043.1 350.4 1043.2 355.6C1043.2 360.8 1043.2 367.4 1043.3 371.9C1043.4 376.3 1043.7 378.5 1043.8 382.2C1043.8 385.9 1043.7 390.1 1043.5 394.1C1043.3 398 1042.9 402.5 1042.6 405.9C1042.3 409.4 1041.7 413.4 1041.5 414.9C1041.4 413.4 1041.1 409.1 1040.9 405.8C1040.6 402.5 1040.2 398.6 1039.9 394.9C1039.6 391.3 1039.1 387.8 1039.1 384C1039 380.3 1039.6 377 1039.6 372.5C1039.7 368 1039.5 362.7 1039.5 356.9C1039.4 351.1 1039.5 340.8 1039.5 337.6ZM1044.8 342.7L1048 345.9C1048 348.2 1048.3 354.8 1048.3 359.6C1048.4 364.4 1048.3 370.6 1048.4 374.7C1048.5 378.9 1048.9 380.9 1048.9 384.3C1049 387.8 1048.9 391.7 1048.7 395.3C1048.5 399 1048.1 403.1 1047.8 406.3C1047.5 409.5 1046.9 413.3 1046.7 414.6C1046.6 413.2 1046.4 409.3 1046.1 406.2C1045.8 403.1 1045.4 399.5 1045.1 396.1C1044.9 392.7 1044.4 389.4 1044.4 385.9C1044.3 382.5 1044.9 379.4 1044.9 375.2C1045 371 1044.8 366.2 1044.8 360.7C1044.7 355.3 1044.8 345.7 1044.8 342.7ZM1049.9 347.8L1053 350.8L1053 414.3L1049.9 414.5C1050 412.8 1050.5 407.9 1050.7 404.6C1050.8 401.3 1051 398.4 1050.8 394.7C1050.6 391 1049.9 386.3 1049.6 382.5C1049.3 378.6 1049.1 375.3 1049.1 371.8C1049.2 368.2 1049.8 365.1 1049.9 361.1C1050 357.1 1049.9 350 1049.9 347.8Z" fill="none" stroke="#0d0d0d" stroke-width="1.9" stroke-linejoin="miter"/>
<g clip-path="url(#cv)" fill="none">
<path d="M0 398.8H1802" stroke="#c3c8c3" stroke-opacity=".65" stroke-width="1"/>
<path d="M39.7 398.8L715.4 750.6M39.7 398.8L771.9 750.6M39.7 398.8L828.4 750.6M39.7 398.8L884.9 750.6M39.7 398.8L941.4 750.6M39.7 398.8L997.9 750.6M39.7 398.8L1054.4 750.6M39.7 398.8L1110.9 750.6M39.7 398.8L1167.4 750.6M39.7 398.8L1223.9 750.6M39.7 398.8L1280.4 750.6M39.7 398.8L1336.9 750.6M39.7 398.8L1393.4 750.6M39.7 398.8L1449.9 750.6M39.7 398.8L1506.4 750.6M39.7 398.8L1562.9 750.6M39.7 398.8L1619.4 750.6M39.7 398.8L1675.9 750.6M39.7 398.8L1732.4 750.6M39.7 398.8L1788.9 750.6M39.7 398.8L1845.4 750.6M39.7 398.8L1901.9 750.6M39.7 398.8L1958.4 750.6M39.7 398.8L2014.9 750.6M39.7 398.8L2071.4 750.6M39.7 398.8L2127.9 750.6" stroke="#5f9a5f" stroke-opacity=".35" stroke-width="1"/>
<path d="M1391 398.8L-640.6 750.6M1391 398.8L-584.1 750.6M1391 398.8L-527.6 750.6M1391 398.8L-471.1 750.6M1391 398.8L-414.6 750.6M1391 398.8L-358.1 750.6M1391 398.8L-301.6 750.6M1391 398.8L-245.1 750.6M1391 398.8L-188.6 750.6M1391 398.8L-132.1 750.6M1391 398.8L-75.6 750.6M1391 398.8L-19.1 750.6M1391 398.8L37.4 750.6M1391 398.8L93.9 750.6M1391 398.8L150.4 750.6M1391 398.8L206.9 750.6M1391 398.8L263.4 750.6M1391 398.8L319.9 750.6M1391 398.8L376.4 750.6M1391 398.8L432.9 750.6M1391 398.8L489.4 750.6M1391 398.8L545.9 750.6M1391 398.8L602.4 750.6M1391 398.8L658.9 750.6M1391 398.8L715.4 750.6M1391 398.8L771.9 750.6M1391 398.8L828.4 750.6M1391 398.8L884.9 750.6M1391 398.8L941.4 750.6M1391 398.8L997.9 750.6M1391 398.8L1054.4 750.6M1391 398.8L1110.9 750.6M1391 398.8L1167.4 750.6M1391 398.8L1223.9 750.6M1391 398.8L1280.4 750.6M1391 398.8L1336.9 750.6M1391 398.8L1393.4 750.6M1391 398.8L1449.9 750.6M1391 398.8L1506.4 750.6M1391 398.8L1562.9 750.6M1391 398.8L1619.4 750.6M1391 398.8L1675.9 750.6M1391 398.8L1732.4 750.6M1391 398.8L1788.9 750.6" stroke="#5f9a5f" stroke-opacity=".35" stroke-width="1"/>
<path d="M0 750.6H1802" stroke="#9dc09d" stroke-opacity=".35" stroke-width="1"/>
<path d="M39.7 398.8L715.4 750.6" stroke="#4f8f4f" stroke-opacity=".55" stroke-width="1"/>
<path d="M663.3 282L1778 73.3M663.3 296.3L1778 113.2M663.3 310.6L1778 153M663.3 324.9L1778 192.8M663.3 339.2L1778 232.7M663.3 353.5L1778 272.5M663.3 367.8L1778 312.4M663.3 382.1L1778 352.2M663.3 396.4L1778 392M663.3 410.7L1778 431.9M663.3 425L1778 471.7M663.3 439.3L1778 511.6M663.3 453.5L1778 551.4M663.3 467.8L1778 591.2M663.3 482.1L1778 631.1M663.3 496.4L1778 670.9M663.3 510.7L1778 710.8M1720.4 58.1L1720.4 739.5M1655.2 71.3L1655.2 726.3M1594.9 83.5L1594.9 714M1539 94.9L1539 702.7M1486.9 105.4L1486.9 692.1M1438.3 115.3L1438.3 682.3M1392.9 124.5L1392.9 673.1M1350.3 133.1L1350.3 664.5M1310.3 141.2L1310.3 656.4M1272.7 148.8L1272.7 648.7M1237.3 156L1237.3 641.6M1203.8 162.8L1203.8 634.8M1172.2 169.2L1172.2 628.4M1142.2 175.3L1142.2 622.3M1113.8 181L1113.8 616.5M1086.8 186.5L1086.8 611M1061.2 191.7L1061.2 605.8M1036.7 196.7L1036.7 600.9M1013.4 201.4L1013.4 596.2M991.2 205.9L991.2 591.7M969.9 210.2L969.9 587.4M949.6 214.3L949.6 583.2M930.2 218.3L930.2 579.3M911.5 222.1L911.5 575.5M893.7 225.7L893.7 571.9M876.5 229.2L876.5 568.4M860 232.5L860 565.1M844.2 235.7L844.2 561.9M829 238.8L829 558.8M814.3 241.8L814.3 555.8M800.2 244.6L800.2 552.9M786.5 247.4L786.5 550.2M773.4 250.1L773.4 547.5M760.7 252.6L760.7 544.9M748.4 255.1L748.4 542.5M736.6 257.5L736.6 540.1M725.1 259.8L725.1 537.7M714 262.1L714 535.5M703.3 264.3L703.3 533.3M692.9 266.4L692.9 531.2M682.8 268.4L682.8 529.2M673 270.4L673 527.2M663.3 272.4L663.3 525.2M1778 46.4L1778 751.1" stroke="#4677d2" stroke-opacity=".5" stroke-width="1"/>
<path clip-path="url(#pb)" d="M663.3 282L1778 73.3M663.3 296.3L1778 113.2M663.3 310.6L1778 153M663.3 324.9L1778 192.8M663.3 339.2L1778 232.7M663.3 353.5L1778 272.5M663.3 367.8L1778 312.4M663.3 382.1L1778 352.2M663.3 396.4L1778 392M663.3 410.7L1778 431.9M663.3 425L1778 471.7M663.3 439.3L1778 511.6M663.3 453.5L1778 551.4M663.3 467.8L1778 591.2M663.3 482.1L1778 631.1M663.3 496.4L1778 670.9M663.3 510.7L1778 710.8M1720.4 58.1L1720.4 739.5M1655.2 71.3L1655.2 726.3M1594.9 83.5L1594.9 714M1539 94.9L1539 702.7M1486.9 105.4L1486.9 692.1M1438.3 115.3L1438.3 682.3M1392.9 124.5L1392.9 673.1M1350.3 133.1L1350.3 664.5M1310.3 141.2L1310.3 656.4M1272.7 148.8L1272.7 648.7M1237.3 156L1237.3 641.6M1203.8 162.8L1203.8 634.8M1172.2 169.2L1172.2 628.4M1142.2 175.3L1142.2 622.3M1113.8 181L1113.8 616.5M1086.8 186.5L1086.8 611M1061.2 191.7L1061.2 605.8M1036.7 196.7L1036.7 600.9M1013.4 201.4L1013.4 596.2M991.2 205.9L991.2 591.7M969.9 210.2L969.9 587.4M949.6 214.3L949.6 583.2M930.2 218.3L930.2 579.3M911.5 222.1L911.5 575.5M893.7 225.7L893.7 571.9M876.5 229.2L876.5 568.4M860 232.5L860 565.1M844.2 235.7L844.2 561.9M829 238.8L829 558.8M814.3 241.8L814.3 555.8M800.2 244.6L800.2 552.9M786.5 247.4L786.5 550.2M773.4 250.1L773.4 547.5M760.7 252.6L760.7 544.9M748.4 255.1L748.4 542.5M736.6 257.5L736.6 540.1M725.1 259.8L725.1 537.7M714 262.1L714 535.5M703.3 264.3L703.3 533.3M692.9 266.4L692.9 531.2M682.8 268.4L682.8 529.2M673 270.4L673 527.2M663.3 272.4L663.3 525.2M1778 46.4L1778 751.1" stroke="#3d6fd0" stroke-opacity=".7" stroke-width="1.3"/>
<path d="M39.7 398.8L1777 46.6" stroke="#5b88dc" stroke-opacity=".7" stroke-width="1"/>
<path d="M39.7 398.8L1797 755" stroke="#3a6fd0" stroke-opacity=".85" stroke-width="1.25"/>
<path d="M715.4 73.3L1053.4 236.2M715.4 113.2L1053.4 256.1M715.4 153L1053.4 276M715.4 192.8L1053.4 295.9M715.4 232.7L1053.4 315.8M715.4 272.5L1053.4 335.7M715.4 312.4L1053.4 355.6M715.4 352.2L1053.4 375.5M715.4 392L1053.4 395.4M715.4 431.9L1053.4 415.3M715.4 471.7L1053.4 435.2M715.4 511.6L1053.4 455.1M715.4 551.4L1053.4 475.1M715.4 591.2L1053.4 495M715.4 631.1L1053.4 514.9M715.4 670.9L1053.4 534.8M715.4 710.8L1053.4 554.7M742.6 60.7L742.6 736.4M767.8 73.8L767.8 723.3M791 85.9L791 711.2M812.6 97.2L812.6 700M832.7 107.7L832.7 689.5M851.4 117.4L851.4 679.8M869 126.6L869 670.6M885.4 135.1L885.4 662.1M900.8 143.2L900.8 654.1M915.3 150.7L915.3 646.5M929 157.9L929 639.4M941.9 164.6L941.9 632.7M954.1 171L954.1 626.3M965.6 177L965.6 620.3M976.6 182.7L976.6 614.6M987 188.1L987 609.2M996.9 193.3L996.9 604M1006.3 198.2L1006.3 599.1M1015.3 202.9L1015.3 594.4M1023.9 207.4L1023.9 589.9M1032.1 211.7L1032.1 585.7M1039.9 215.7L1039.9 581.6M1047.4 219.7L1047.4 577.7M1054.6 223.4L1054.6 574" stroke="#ee9247" stroke-opacity=".52" stroke-width="1"/>
<path d="M715.4 46.5L1391 398.8M715.4 46.5L715.4 750.6" stroke="#ee9247" stroke-opacity=".8" stroke-width="1"/>
<path d="M697 760L715.4 750.6" stroke="#e9954f" stroke-width="1"/>
<path d="M715.4 750.6L1391 398.8" stroke="#e0853f" stroke-opacity=".92" stroke-width="1.1"/>
<path d="M715.4 214.7V750.6" stroke="#634438" stroke-width="2"/>
<path d="M535 656.7L715.4 750.6" stroke="#3d5d3d" stroke-width="1.8"/>
<path d="M39.7 398.8L535 639.8M585.4 664.3L641 691.4M715.4 727.6L760 749.3" stroke="#555" stroke-width="1" stroke-dasharray="1.3 3.4"/>
<path d="M715.4 750.6V771" stroke="#bdbdbd" stroke-width="1"/>
</g>
<circle cx="39.7" cy="398.8" r="4" fill="#fff" stroke="#555" stroke-width="1"/><circle cx="1391" cy="398.8" r="4" fill="#fff" stroke="#555" stroke-width="1"/><circle cx="742.4" cy="736.4" r="4" fill="#fff" stroke="#777" stroke-width="1"/><circle cx="696.8" cy="759.8" r="4.2" fill="#6e6e6e"/><circle cx="714.9" cy="771" r="4.2" fill="#6e6e6e"/><circle cx="1796.8" cy="755" r="4.2" fill="#8e8e8e"/><path d="M711.1 46.5l4 -4l4 4l-4 4Z" fill="#fff" stroke="#777" stroke-width="1"/><path d="M1773.4 46.6l3.6 -3.6l3.6 3.6l-3.6 3.6Z" fill="#fff" stroke="#fff" stroke-width="1"/><path d="M659.9 525.8l3.4 -3.4l3.4 3.4l-3.4 3.4Z" fill="#fff" stroke="#777" stroke-width="1"/><path d="M712 723.3l3.4 -3.4l3.4 3.4l-3.4 3.4Z" fill="#fff" stroke="#777" stroke-width="1"/><path d="M1049.6 575l3.4 -3.4l3.4 3.4l-3.4 3.4Z" fill="#fff" stroke="#777" stroke-width="1"/><path d="M715.4 752.2l-4 -2.2l4 -2.2l4 2.2z" fill="#5fae5f"/><path d="M1018.4 400.4l1.2 14.6l3.3-3.6l3.2 6.2l2.6-1.4l-3.1-6l4.9-.5z" fill="#111" stroke="#fff" stroke-width=".6"/><g transform="translate(1034.4 421)"><path d="M0-9.2L8.2-4.8V4.6L0 9.2L-8.2 4.6V-4.8Z" fill="#111"/><path d="M-8.2-4.8L0-.4L8.2-4.8M0-.4V9.2" fill="none" stroke="#fff" stroke-width="1.1"/></g><circle cx="-2.1" cy="81.3" r="3.4" fill="#222"/>
</svg>
<div class="abs topbar"></div>
<div class="abs" style="left:0;top:37px;width:1823px;height:2px;background:#2c2c2c"></div>
<div class="abs tab" style="left:0;width:238px;background:#343434;color:#9d9d9d"><span style="right:42px;letter-spacing:-0.3px">on.ai @ 66.67 % (CMYK/Preview)</span><svg class="abs" style="left:219px;top:12px" width="10" height="10" viewBox="0 0 10 10"><path d="M1.4 1.4L8.6 8.6M8.6 1.4L1.4 8.6" stroke="#b4b4b4" stroke-width="1.5"/></svg></div>
<div class="abs tab" style="left:238px;width:294px;background:#474747;color:#ececec"><span style="left:12px">Untitled-1* @ 66.67 % (CMYK/Preview)</span><svg class="abs" style="left:276.5px;top:12px" width="10" height="10" viewBox="0 0 10 10"><path d="M1.4 1.4L8.6 8.6M8.6 1.4L1.4 8.6" stroke="#f0f0f0" stroke-width="2"/></svg></div>
<div class="abs topstrip"></div>
<div class="abs" style="left:1802px;top:39px;width:21px;height:916px;background:#404040"></div>
<svg class="abs" style="left:1804px;top:42px" width="16" height="12" viewBox="0 0 16 12"><path d="M3.5 9L8 4.5L12.5 9" fill="none" stroke="#9a9a9a" stroke-width="1.6"/></svg>
<div class="abs" style="left:1823px;top:0;width:97px;height:955px;background:#333"></div>
<div class="abs" style="left:1825px;top:3px;width:95px;height:14px;background:#3f3f3f"></div>
<div class="abs rcol" style="left:1825px;top:18px;width:46px;height:937px"></div>
<div class="abs rcol" style="left:1873px;top:18px;width:47px;height:937px;background:#484848"></div>
<div class="abs rcol" style="left:1873px;top:18px;width:47px;height:116px"></div>
<div class="abs" style="left:1873px;top:134px;width:47px;height:1.5px;background:#3a3a3a"></div>
<div class="abs topstrip"></div>
<svg class="abs" style="left:1854.5px;top:6px" width="10" height="8" viewBox="0 0 10 8"><path d="M4 1L1.2 4L4 7M8.6 1L5.8 4L8.6 7" fill="none" stroke="#c8c8c8" stroke-width="1.3"/></svg>
<svg class="abs" style="left:1903px;top:6px" width="10" height="8" viewBox="0 0 10 8"><path d="M4 1L1.2 4L4 7M8.6 1L5.8 4L8.6 7" fill="none" stroke="#c8c8c8" stroke-width="1.3"/></svg>
<div class="abs" style="left:1825px;top:100px;width:46px;height:1.6px;background:#363636"></div>
<div class="abs" style="left:1825px;top:217.5px;width:46px;height:1.6px;background:#363636"></div>
<div class="abs" style="left:1825px;top:335.7px;width:46px;height:1.6px;background:#363636"></div>
<div class="abs" style="left:1825px;top:419.6px;width:46px;height:1.6px;background:#363636"></div>
<div class="abs" style="left:1825px;top:503px;width:46px;height:1.6px;background:#363636"></div>
<div class="abs" style="left:1825px;top:621px;width:46px;height:1.6px;background:#363636"></div>
<svg class="abs" style="left:1836.0px;top:21.5px" width="26" height="5" viewBox="0 0 26 5"><rect x="0.0" y="0" width="1.2" height="4.4" fill="#383838"/><rect x="2.9" y="0" width="1.2" height="4.4" fill="#383838"/><rect x="5.8" y="0" width="1.2" height="4.4" fill="#383838"/><rect x="8.7" y="0" width="1.2" height="4.4" fill="#383838"/><rect x="11.6" y="0" width="1.2" height="4.4" fill="#383838"/><rect x="14.5" y="0" width="1.2" height="4.4" fill="#383838"/><rect x="17.4" y="0" width="1.2" height="4.4" fill="#383838"/><rect x="20.3" y="0" width="1.2" height="4.4" fill="#383838"/><rect x="23.2" y="0" width="1.2" height="4.4" fill="#383838"/></svg>
<svg class="abs" style="left:1836.0px;top:105.5px" width="26" height="5" viewBox="0 0 26 5"><rect x="0.0" y="0" width="1.2" height="4.4" fill="#383838"/><rect x="2.9" y="0" width="1.2" height="4.4" fill="#383838"/><rect x="5.8" y="0" width="1.2" height="4.4" fill="#383838"/><rect x="8.7" y="0" width="1.2" height="4.4" fill="#383838"/><rect x="11.6" y="0" width="1.2" height="4.4" fill="#383838"/><rect x="14.5" y="0" width="1.2" height="4.4" fill="#383838"/><rect x="17.4" y="0" width="1.2" height="4.4" fill="#383838"/><rect x="20.3" y="0" width="1.2" height="4.4" fill="#383838"/><rect x="23.2" y="0" width="1.2" height="4.4" fill="#383838"/></svg>
<svg class="abs" style="left:1836.0px;top:222.5px" width="26" height="5" viewBox="0 0 26 5"><rect x="0.0" y="0" width="1.2" height="4.4" fill="#383838"/><rect x="2.9" y="0" width="1.2" height="4.4" fill="#383838"/><rect x="5.8" y="0" width="1.2" height="4.4" fill="#383838"/><rect x="8.7" y="0" width="1.2" height="4.4" fill="#383838"/><rect x="11.6" y="0" width="1.2" height="4.4" fill="#383838"/><rect x="14.5" y="0" width="1.2" height="4.4" fill="#383838"/><rect x="17.4" y="0" width="1.2" height="4.4" fill="#383838"/><rect x="20.3" y="0" width="1.2" height="4.4" fill="#383838"/><rect x="23.2" y="0" width="1.2" height="4.4" fill="#383838"/></svg>
<svg class="abs" style="left:1836.0px;top:341px" width="26" height="5" viewBox="0 0 26 5"><rect x="0.0" y="0" width="1.2" height="4.4" fill="#383838"/><rect x="2.9" y="0" width="1.2" height="4.4" fill="#383838"/><rect x="5.8" y="0" width="1.2" height="4.4" fill="#383838"/><rect x="8.7" y="0" width="1.2" height="4.4" fill="#383838"/><rect x="11.6" y="0" width="1.2" height="4.4" fill="#383838"/><rect x="14.5" y="0" width="1.2" height="4.4" fill="#383838"/><rect x="17.4" y="0" width="1.2" height="4.4" fill="#383838"/><rect x="20.3" y="0" width="1.2" height="4.4" fill="#383838"/><rect x="23.2" y="0" width="1.2" height="4.4" fill="#383838"/></svg>
<svg class="abs" style="left:1836.0px;top:424px" width="26" height="5" viewBox="0 0 26 5"><rect x="0.0" y="0" width="1.2" height="4.4" fill="#383838"/><rect x="2.9" y="0" width="1.2" height="4.4" fill="#383838"/><rect x="5.8" y="0" width="1.2" height="4.4" fill="#383838"/><rect x="8.7" y="0" width="1.2" height="4.4" fill="#383838"/><rect x="11.6" y="0" width="1.2" height="4.4" fill="#383838"/><rect x="14.5" y="0" width="1.2" height="4.4" fill="#383838"/><rect x="17.4" y="0" width="1.2" height="4.4" fill="#383838"/><rect x="20.3" y="0" width="1.2" height="4.4" fill="#383838"/><rect x="23.2" y="0" width="1.2" height="4.4" fill="#383838"/></svg>
<svg class="abs" style="left:1836.0px;top:508px" width="26" height="5" viewBox="0 0 26 5"><rect x="0.0" y="0" width="1.2" height="4.4" fill="#383838"/><rect x="2.9" y="0" width="1.2" height="4.4" fill="#383838"/><rect x="5.8" y="0" width="1.2" height="4.4" fill="#383838"/><rect x="8.7" y="0" width="1.2" height="4.4" fill="#383838"/><rect x="11.6" y="0" width="1.2" height="4.4" fill="#383838"/><rect x="14.5" y="0" width="1.2" height="4.4" fill="#383838"/><rect x="17.4" y="0" width="1.2" height="4.4" fill="#383838"/><rect x="20.3" y="0" width="1.2" height="4.4" fill="#383838"/><rect x="23.2" y="0" width="1.2" height="4.4" fill="#383838"/></svg>
<svg class="abs" style="left:1884.0px;top:21.5px" width="26" height="5" viewBox="0 0 26 5"><rect x="0.0" y="0" width="1.2" height="4.4" fill="#383838"/><rect x="2.9" y="0" width="1.2" height="4.4" fill="#383838"/><rect x="5.8" y="0" width="1.2" height="4.4" fill="#383838"/><rect x="8.7" y="0" width="1.2" height="4.4" fill="#383838"/><rect x="11.6" y="0" width="1.2" height="4.4" fill="#383838"/><rect x="14.5" y="0" width="1.2" height="4.4" fill="#383838"/><rect x="17.4" y="0" width="1.2" height="4.4" fill="#383838"/><rect x="20.3" y="0" width="1.2" height="4.4" fill="#383838"/><rect x="23.2" y="0" width="1.2" height="4.4" fill="#383838"/></svg>
<svg class="abs" style="left:1836.0px;top:34.5px" width="26.0" height="24.0" viewBox="0 0 26 24"><path d="M1.1 13.4C1.2 11.4 3.2 9.9 5.6 9.6C7.6 9.3 9.6 9.8 10.2 8.2C10.7 6.6 10.9 4.9 12.4 4C14.6 2.8 18.6 3 21.2 4.8C23.6 6.5 24.9 9.4 24.8 12.3C24.6 15.6 22.4 18.2 19 19.6C15.4 21.1 10.6 21.1 6.8 19.8C3.4 18.6 1 16.4 1.1 13.4Z" fill="#d2d2d2"/><circle cx="6.8" cy="14.8" r="1.85" fill="#4a4a4a"/><circle cx="12.3" cy="16.4" r="1.85" fill="#4a4a4a"/><circle cx="17.7" cy="15.6" r="1.55" fill="#4a4a4a"/><circle cx="21.1" cy="12.6" r="1.05" fill="#4a4a4a"/><circle cx="20" cy="9.1" r="0.95" fill="#4a4a4a"/></svg>
<svg class="abs" style="left:1836.0px;top:68.4px" width="26.0" height="24.0" viewBox="0 0 26 24"><path d="M3.9 21.3L3.9 2.9A18.4 18.4 0 0 1 8.7 3.5Z" fill="#141414"/><path d="M3.9 21.3L8.7 3.5A18.4 18.4 0 0 1 13.1 5.4Z" fill="#363636"/><path d="M3.9 21.3L13.1 5.4A18.4 18.4 0 0 1 16.9 8.3Z" fill="#5c5c5c"/><path d="M3.9 21.3L16.9 8.3A18.4 18.4 0 0 1 19.8 12.1Z" fill="#888888"/><path d="M3.9 21.3L19.8 12.1A18.4 18.4 0 0 1 21.7 16.5Z" fill="#b4b4b4"/><path d="M3.9 21.3L21.7 16.5A18.4 18.4 0 0 1 22.3 21.3Z" fill="#e8e8e8"/><path d="M3.9 2.9A18.4 18.4 0 0 1 22.3 21.3H3.9Z" fill="none" stroke="#d2d2d2" stroke-width="1.1"/></svg>
<svg class="abs" style="left:1836.0px;top:118.0px" width="26.0" height="24.0" viewBox="0 0 26 24"><rect x="3.4" y="5.8" width="19.4" height="12.6" fill="#808080" stroke="#c6c6c6" stroke-width="1.3"/><rect x="4" y="6.4" width="5.8" height="5.4" fill="#6c6c6c"/><rect x="10.4" y="6.4" width="5.6" height="5.4" fill="#bcbcbc"/><rect x="16.6" y="6.4" width="5.6" height="5.4" fill="#6c6c6c"/><path d="M9.9 5.8V18.4M16.3 5.8V18.4M3.4 12.1H22.8" stroke="#c6c6c6" stroke-width="1.1"/></svg>
<svg class="abs" style="left:1836.0px;top:152.6px" width="26.0" height="24.0" viewBox="0 0 26 24"><path d="M7.4 15.2H18.7V22.8H7.4Z" fill="#d2d2d2"/><path d="M9.6 15.2L6.6 9.5M12.2 15.2L10.8 5M15.6 15.2L19 9.6" stroke="#d2d2d2" stroke-width="1.5"/><path d="M4.6 10.6C3.6 8 4.4 5.4 6 3.8C7.6 5.6 8.4 8.4 7.6 11.4Z" fill="#d2d2d2"/><path d="M9 1.2H12V3.4L12.8 6.2H8.8L9.6 3.4Z" fill="#d2d2d2"/><path d="M15.2 8.2C16.4 5.6 19.6 4.6 22 5.8C23.4 6.6 24 8 23.8 9.2C22 8.6 20.2 9.2 19.4 10.8Z" fill="#d2d2d2"/></svg>
<svg class="abs" style="left:1836.0px;top:186.5px" width="26.0" height="24.0" viewBox="0 0 26 24"><circle cx="13.2" cy="5.6" r="4.9" fill="#d2d2d2"/><circle cx="7.8" cy="12" r="4.9" fill="#d2d2d2"/><circle cx="18.6" cy="12" r="4.9" fill="#d2d2d2"/><path d="M12.3 9H14.1C14.1 15 14.6 18.6 17.4 19.8H20.4V21.2H6V19.8H9C11.8 18.6 12.3 15 12.3 9Z" fill="#d2d2d2"/></svg>
<div class="abs" style="left:1831px;top:233px;width:34px;height:28px;background:#2a2a2a;border-radius:3px"></div>
<svg class="abs" style="left:1836.0px;top:234.5px" width="26.0" height="24.0" viewBox="0 0 26 24"><path d="M2 5.2H24" stroke="#e6e6e6" stroke-width="1.6"/><path d="M2 11.6H24" stroke="#e6e6e6" stroke-width="2.6"/><path d="M2 19H24" stroke="#e6e6e6" stroke-width="4"/></svg>
<svg class="abs" style="left:1836.0px;top:269.7px" width="26.0" height="24.0" viewBox="0 0 26 24"><defs><linearGradient id="gg" x1="0" y1="0" x2="1" y2="0"><stop offset="0" stop-color="#1c1c1c"/><stop offset="1" stop-color="#e8e8e8"/></linearGradient></defs><rect x="2.6" y="4.6" width="20.8" height="14.8" fill="url(#gg)" stroke="#d2d2d2" stroke-width="1.4"/></svg>
<svg class="abs" style="left:1836.0px;top:304.8px" width="26.0" height="24.0" viewBox="0 0 26 24"><circle cx="9.5" cy="9" r="7.8" fill="#d2d2d2"/><circle cx="15.5" cy="15" r="7.4" fill="#8a8a8a" stroke="#d2d2d2" stroke-width="1.4"/></svg>
<svg class="abs" style="left:1836.0px;top:353.3px" width="26.0" height="24.0" viewBox="0 0 26 24"><circle cx="13" cy="12" r="7.6" fill="#d2d2d2"/><circle cx="13" cy="12" r="10.2" fill="none" stroke="#d2d2d2" stroke-width="1.5" stroke-dasharray="2.3 2.2"/></svg>
<svg class="abs" style="left:1836.0px;top:387.7px" width="26.0" height="24.0" viewBox="0 0 26 24"><rect x="6.5" y="2.5" width="17" height="16" fill="none" stroke="#d2d2d2" stroke-width="1.5"/><rect x="2.5" y="12" width="6.5" height="6.5" fill="#4a4a4a" stroke="#d2d2d2" stroke-width="1.4"/><rect x="5.6" y="15" width="6.5" height="6.5" fill="#4a4a4a" stroke="#d2d2d2" stroke-width="1.4"/></svg>
<svg class="abs" style="left:1836.0px;top:437.0px" width="26.0" height="24.0" viewBox="0 0 26 24"><path d="M11 5.2H3.4V21.4H21.6V13.6" fill="none" stroke="#d2d2d2" stroke-width="2"/><path d="M12.6 12.2L23 2M15.4 2.4H22.8V9.8" fill="none" stroke="#d2d2d2" stroke-width="2"/></svg>
<svg class="abs" style="left:1836.0px;top:471.0px" width="26.0" height="24.0" viewBox="0 0 26 24"><rect x="2.4" y="2.8" width="13" height="14.8" fill="none" stroke="#d2d2d2" stroke-width="1.6"/><rect x="7.8" y="9.6" width="15.4" height="11.6" fill="#4a4a4a" stroke="#d2d2d2" stroke-width="1.6"/></svg>
<svg class="abs" style="left:1836.0px;top:520.7px" width="26.0" height="24.0" viewBox="0 0 26 24"><rect x="5.8" y="5.5" width="14.4" height="13.4" fill="none" stroke="#d2d2d2" stroke-width="1.2"/><rect x="3.9" y="3.6" width="3.8" height="3.8" fill="#d2d2d2"/><rect x="3.9" y="10.3" width="3.8" height="3.8" fill="#d2d2d2"/><rect x="3.9" y="17" width="3.8" height="3.8" fill="#d2d2d2"/><rect x="11.1" y="3.6" width="3.8" height="3.8" fill="#d2d2d2"/><rect x="11.1" y="17" width="3.8" height="3.8" fill="#d2d2d2"/><rect x="18.3" y="3.6" width="3.8" height="3.8" fill="#d2d2d2"/><rect x="18.3" y="10.3" width="3.8" height="3.8" fill="#d2d2d2"/><rect x="18.3" y="17" width="3.8" height="3.8" fill="#d2d2d2"/><rect x="12" y="11.2" width="2" height="2" fill="#d2d2d2"/></svg>
<svg class="abs" style="left:1836.0px;top:555.0px" width="26.0" height="24.0" viewBox="0 0 26 24"><path d="M4 1.2V23" stroke="#d2d2d2" stroke-width="1.4"/><rect x="6" y="4.2" width="10" height="7" fill="#d2d2d2"/><rect x="6" y="13.6" width="16.2" height="6.6" fill="#d2d2d2"/></svg>
<svg class="abs" style="left:1836.0px;top:589.0px" width="26.0" height="24.0" viewBox="0 0 26 24"><rect x="4.3" y="2.4" width="11.2" height="11.2" fill="#d2d2d2"/><rect x="10.3" y="9" width="11.9" height="11.9" fill="#d2d2d2"/><rect x="10.3" y="9" width="5.2" height="4.6" fill="#6a6a6a" stroke="#d2d2d2" stroke-width="1"/></svg>
<svg class="abs" style="left:1885.54px;top:35.46px" width="23.92" height="22.08" viewBox="0 0 26 24"><path d="M2 6H24M2 12.5H24M2 19H24" stroke="#d2d2d2" stroke-width="1.4"/><circle cx="8" cy="6" r="2.5" fill="#4a4a4a" stroke="#d2d2d2" stroke-width="1.4"/><circle cx="18" cy="12.5" r="2.5" fill="#4a4a4a" stroke="#d2d2d2" stroke-width="1.4"/><circle cx="11" cy="19" r="2.5" fill="#4a4a4a" stroke="#d2d2d2" stroke-width="1.4"/></svg>
<svg class="abs" style="left:1885.54px;top:69.36px" width="23.92" height="22.08" viewBox="0 0 26 24"><rect x="2.6" y="2.6" width="17" height="17" fill="none" stroke="#d2d2d2" stroke-width="1.4"/><rect x="5.8" y="5.4" width="17.6" height="17" fill="#4a4a4a" stroke="#d2d2d2" stroke-width="1.6"/><path d="M14 5.4H19.4V14L16.7 11.6L14 14Z" fill="#d2d2d2"/></svg>
<svg class="abs" style="left:1885.41px;top:104.44px" width="24.18" height="22.32" viewBox="0 0 26 24"><path d="M13 2L24 8.6L13 15.2L2 8.6Z" fill="#d2d2d2"/><path d="M3.5 13.6L13 19.3L22.5 13.6" fill="none" stroke="#d2d2d2" stroke-width="2.2"/></svg>
<div class="abs panel"><div class="abs" style="left:0;top:-1px;width:280px;height:425px">
<div class="abs ptabs"></div>
<div class="abs" style="left:0;top:0;width:280px;height:5px;background:#3a3a3a"></div>
<div class="abs" style="left:0;top:5px;width:68px;height:33px;background:#4b4b4b"></div>
<svg class="abs" style="left:5px;top:14px" width="8" height="12" viewBox="0 0 8 12"><path d="M1.2 4.2L4 1.4L6.8 4.2M1.2 7.8L4 10.6L6.8 7.8" fill="none" stroke="#b8b8b8" stroke-width="1.2"/></svg>
<div class="abs ptab" style="left:18px;color:#fff">Stroke</div>
<div class="abs ptab" style="left:80px;color:#b4b4b4">Gradient</div>
<div class="abs ptab" style="left:142px;width:60px;overflow:hidden;color:#b4b4b4">Transparency</div>
<div class="abs" style="left:131px;top:5px;width:1px;height:33px;background:#383838"></div>
<div class="abs" style="left:201px;top:5px;width:1px;height:33px;background:#383838"></div>
<svg class="abs" style="left:229px;top:16px" width="14" height="10" viewBox="0 0 14 10"><path d="M1.5 1.2L5.3 5L1.5 8.8M7.5 1.2L11.3 5L7.5 8.8" fill="none" stroke="#d6d6d6" stroke-width="1.5"/></svg>
<div class="abs" style="left:250px;top:14px;width:1px;height:13px;background:#9a9a9a"></div>
<svg class="abs" style="left:259px;top:15px" width="14" height="12" viewBox="0 0 14 12"><path d="M0.5 2H13.5M0.5 6H13.5M0.5 10H13.5" stroke="#c8c8c8" stroke-width="1.5"/></svg>
<div class="abs lbl" style="left:-46px;top:50px">Weight:</div>
<div class="abs fld" style="left:80px;top:46px;width:105px;height:24px;background:#454545"></div>
<div class="abs" style="left:101px;top:47px;width:61px;height:22px;background:#383838"></div>
<svg class="abs" style="left:85px;top:48px" width="12" height="20" viewBox="0 0 12 20"><path d="M2 7L6 3L10 7M2 13L6 17L10 13" fill="none" stroke="#d8d8d8" stroke-width="1.5"/></svg>
<div class="abs" style="left:105px;top:50px;font-size:12px;color:#e6e6e6;line-height:16px">1 pt</div>
<svg class="abs" style="left:168px;top:54px" width="10" height="8" viewBox="0 0 10 8"><path d="M1.2 1.8L5 5.6L8.8 1.8" fill="none" stroke="#e8e8e8" stroke-width="1.8"/></svg>
<div class="abs lbl" style="left:-46px;top:82px">Cap:</div>
<div class="abs grp" style="left:80px;top:78px;width:81px;height:25px"></div><div class="abs" style="left:80px;top:78px;width:26px;height:25px;background:#262626;border-radius:3px 0 0 3px"></div><div class="abs" style="left:106px;top:79px;width:1px;height:23px;background:#5c5c5c"></div><div class="abs" style="left:134px;top:79px;width:1px;height:23px;background:#5c5c5c"></div><svg class="abs" style="left:84px;top:82px" width="19" height="17" viewBox="0 0 19 17"><path d="M6 0.4H16V15.6H6V10.6A2.7 2.7 0 0 1 6 5.4Z" fill="#fff"/><path d="M6 8H16" stroke="#1a1a1a" stroke-width="1"/><circle cx="6" cy="8" r="1.6" fill="#1a1a1a"/></svg><svg class="abs" style="left:112px;top:82px" width="19" height="17" viewBox="0 0 19 17"><path d="M8.6 0.4H16V15.6H8.6A7.6 7.6 0 0 1 8.6 0.4Z" fill="#c2c2c2"/><path d="M8 8H16" stroke="#3c3c3c" stroke-width="1.2"/><circle cx="8" cy="8" r="1.7" fill="#3c3c3c"/></svg><svg class="abs" style="left:140px;top:82px" width="19" height="17" viewBox="0 0 19 17"><path d="M1.5 0.4H15.5V15.6H1.5Z" fill="#c2c2c2"/><path d="M8 8H15.5" stroke="#3c3c3c" stroke-width="1.2"/><circle cx="8" cy="8" r="1.7" fill="#3c3c3c"/></svg>
<div class="abs lbl" style="left:-46px;top:115px">Corner:</div>
<div class="abs grp" style="left:80px;top:110px;width:81px;height:25px"></div><div class="abs" style="left:80px;top:110px;width:26px;height:25px;background:#262626;border-radius:3px 0 0 3px"></div><div class="abs" style="left:106px;top:111px;width:1px;height:23px;background:#5c5c5c"></div><div class="abs" style="left:134px;top:111px;width:1px;height:23px;background:#5c5c5c"></div><svg class="abs" style="left:84px;top:114px" width="19" height="17" viewBox="0 0 19 17"><path d="M1 0.4H16V11H11.6V15.2H1Z" fill="#fff"/><path d="M7.8 15.2V7.9H16" fill="none" stroke="#1a1a1a" stroke-width="1.1"/><circle cx="7.8" cy="7.9" r="1.7" fill="#1a1a1a"/></svg><svg class="abs" style="left:112px;top:114px" width="19" height="17" viewBox="0 0 19 17"><path d="M9 0.4H16V11H11.6V15.2H1V8.4A8 8 0 0 1 9 0.4Z" fill="#c2c2c2"/><path d="M7.9 15.2V7.9H16" fill="none" stroke="#3c3c3c" stroke-width="1.1"/><circle cx="7.9" cy="7.9" r="1.7" fill="#3c3c3c"/></svg><svg class="abs" style="left:140px;top:114px" width="19" height="17" viewBox="0 0 19 17"><path d="M8 0.4H16V11H11.6V15.2H1V7.4Z" fill="#c2c2c2"/><path d="M7.9 15.2V7.9H16" fill="none" stroke="#3c3c3c" stroke-width="1.1"/><circle cx="7.9" cy="7.9" r="1.7" fill="#3c3c3c"/></svg>
<div class="abs lbl" style="left:91px;top:115px">Limit:</div>
<div class="abs fld" style="left:217px;top:110px;width:45px;height:24px;background:#383838"></div>
<div class="abs" style="left:223px;top:114px;font-size:12px;color:#e6e6e6;line-height:16px">10</div>
<div class="abs" style="left:267px;top:115px;font-size:12px;color:#c8c8c8;line-height:16px">x</div>
<div class="abs lbl" style="left:-46px;top:147px">Align Stroke:</div>
<div class="abs grp" style="left:80px;top:143px;width:81px;height:25px"></div><div class="abs" style="left:80px;top:143px;width:26px;height:25px;background:#262626;border-radius:3px 0 0 3px"></div><div class="abs" style="left:106px;top:144px;width:1px;height:23px;background:#5c5c5c"></div><div class="abs" style="left:134px;top:144px;width:1px;height:23px;background:#5c5c5c"></div><svg class="abs" style="left:84px;top:147px" width="19" height="17" viewBox="0 0 19 17"><path d="M1 0.4H10.5V6.2H16V15.6H1Z" fill="#fff"/><path d="M5.6 0.4V10.6H16" fill="none" stroke="#1a1a1a" stroke-width="1.1"/><circle cx="5.6" cy="10.6" r="1.7" fill="#1a1a1a"/></svg><svg class="abs" style="left:112px;top:147px" width="19" height="17" viewBox="0 0 19 17"><path d="M2.4 0.4H8.8V7.2H16V13.6H2.4Z" fill="#b4b4b4"/><path d="M2.8 0.4V13H16" fill="none" stroke="#dcdcdc" stroke-width="1"/><circle cx="3" cy="12.8" r="2.2" fill="#4b4b4b" stroke="#dcdcdc" stroke-width="1"/></svg><svg class="abs" style="left:140px;top:147px" width="19" height="17" viewBox="0 0 19 17"><path d="M1.5 0.4H10V7.2H15.5V15.6H1.5Z" fill="#c2c2c2"/><path d="M8 0.4V6.4Q8 7.6 9.2 7.6H15.5" fill="none" stroke="#e4e4e4" stroke-width="1"/><circle cx="7.8" cy="9.2" r="1.7" fill="#3c3c3c"/></svg>
<div class="abs sep" style="top:175px"></div>
<div class="abs" style="left:7px;top:188px;width:13px;height:13px;border:1.3px solid #b5b5b5;border-radius:2px;box-sizing:content-box"></div>
<div class="abs" style="left:28px;top:187px;font-size:12px;color:#e8e8e8;line-height:16px;white-space:nowrap">Dashed Line</div>
<div class="abs grp" style="left:180px;top:183px;width:93px;height:26px;border-color:#5a5a5a"></div>
<div class="abs" style="left:226px;top:184px;width:1px;height:24px;background:#5a5a5a"></div>
<svg class="abs" style="left:186px;top:189px" width="35" height="15" viewBox="0 0 35 15"><path d="M1 7V1.5H6M11 1.5H22M27 1.5H33.5V7M33.5 10V13.5H27M22 13.5H11M6 13.5H1V10" fill="none" stroke="#727272" stroke-width="1.6"/></svg>
<svg class="abs" style="left:232px;top:189px" width="35" height="15" viewBox="0 0 35 15"><path d="M1 5V1.5H6M12 1.5H23M29 1.5H34V5M34 10V13.5H29M23 13.5H12M6 13.5H1V10" fill="none" stroke="#727272" stroke-width="1.6"/></svg>
<div class="abs dfld" style="left:7.0px;top:216px;width:41.5px;height:25px"></div>
<div class="abs dl" style="left:7.0px;top:245px">dash</div>
<div class="abs dfld" style="left:51.8px;top:216px;width:41.5px;height:25px"></div>
<div class="abs dl" style="left:51.8px;top:245px">gap</div>
<div class="abs dfld" style="left:96.6px;top:216px;width:41.5px;height:25px"></div>
<div class="abs dl" style="left:96.6px;top:245px">dash</div>
<div class="abs dfld" style="left:141.4px;top:216px;width:41.5px;height:25px"></div>
<div class="abs dl" style="left:141.4px;top:245px">gap</div>
<div class="abs dfld" style="left:186.2px;top:216px;width:41.5px;height:25px"></div>
<div class="abs dl" style="left:186.2px;top:245px">dash</div>
<div class="abs dfld" style="left:231.0px;top:216px;width:41.5px;height:25px"></div>
<div class="abs dl" style="left:231.0px;top:245px">gap</div>
<div class="abs sep" style="top:268px"></div>
<div class="abs lbl" style="left:-46px;top:281px">Arrowheads:</div>
<div class="abs" style="left:80px;top:277px;width:68px;height:24px;background:#3b3b3b;border-radius:2px;box-shadow:0 0 0 1px #565656"></div>
<div class="abs" style="left:80px;top:277px;width:45px;height:24px;background:#e9e9e9;border-radius:2px 0 0 2px"></div>
<div class="abs" style="left:86px;top:287.5px;width:33px;height:2.6px;background:#111"></div>
<svg class="abs" style="left:131px;top:285px" width="10" height="8" viewBox="0 0 10 8"><path d="M1.2 1.8L5 5.6L8.8 1.8" fill="none" stroke="#e8e8e8" stroke-width="1.8"/></svg>
<div class="abs" style="left:156px;top:277px;width:68px;height:24px;background:#3b3b3b;border-radius:2px;box-shadow:0 0 0 1px #565656"></div>
<div class="abs" style="left:156px;top:277px;width:45px;height:24px;background:#e9e9e9;border-radius:2px 0 0 2px"></div>
<div class="abs" style="left:162px;top:287.5px;width:33px;height:2.6px;background:#111"></div>
<svg class="abs" style="left:207px;top:285px" width="10" height="8" viewBox="0 0 10 8"><path d="M1.2 1.8L5 5.6L8.8 1.8" fill="none" stroke="#e8e8e8" stroke-width="1.8"/></svg>
<svg class="abs" style="left:250px;top:281px" width="18" height="16" viewBox="0 0 18 16"><path d="M2 4.5H14M10.5 1L14.5 4.5L10.5 8M16 11.5H4M7.5 8L3.5 11.5L7.5 15" fill="none" stroke="#808080" stroke-width="1.6"/></svg>
<div class="abs lbl dis" style="left:-46px;top:318px">Scale:</div>
<div class="abs" style="left:80px;top:313px;width:68px;height:25px;background:#525252;border-radius:2px"></div>
<div class="abs" style="left:102px;top:314px;width:1px;height:23px;background:#4b4b4b"></div>
<svg class="abs" style="left:85px;top:316px" width="12" height="20" viewBox="0 0 12 20"><path d="M2 7L6 3L10 7M2 13L6 17L10 13" fill="none" stroke="#707070" stroke-width="1.5"/></svg>
<div class="abs" style="left:106px;top:318px;font-size:12px;color:#727272;line-height:16px">100%</div>
<div class="abs" style="left:156px;top:313px;width:68px;height:25px;background:#525252;border-radius:2px"></div>
<div class="abs" style="left:178px;top:314px;width:1px;height:23px;background:#4b4b4b"></div>
<svg class="abs" style="left:161px;top:316px" width="12" height="20" viewBox="0 0 12 20"><path d="M2 7L6 3L10 7M2 13L6 17L10 13" fill="none" stroke="#707070" stroke-width="1.5"/></svg>
<div class="abs" style="left:182px;top:318px;font-size:12px;color:#727272;line-height:16px">100%</div>
<svg class="abs" style="left:248px;top:314px" width="20" height="24" viewBox="0 0 20 24"><path d="M6 9V6.5a4 4 0 0 1 8 0V9M14 14v3a4 4 0 0 1-8 0V14" fill="none" stroke="#7a7a7a" stroke-width="1.8"/><path d="M2 3L18 21" stroke="#7a7a7a" stroke-width="1.6"/></svg>
<div class="abs lbl dis" style="left:-46px;top:353px">Align:</div>
<div class="abs grp" style="left:79px;top:348px;width:55px;height:26px;border-color:#5e5e5e"></div>
<div class="abs" style="left:106px;top:349px;width:1px;height:24px;background:#5e5e5e"></div>
<svg class="abs" style="left:84px;top:354px" width="18" height="14" viewBox="0 0 18 14"><path d="M2 3H9M7 1.2L9 3L7 4.8" fill="none" stroke="#7c7c7c" stroke-width="1.2"/><path d="M2 9.5H10V6.5L15.5 9.5L10 12.5V9.5" fill="#7c7c7c" stroke="#7c7c7c" stroke-width="1"/></svg>
<svg class="abs" style="left:111px;top:354px" width="18" height="14" viewBox="0 0 18 14"><path d="M2 3H15M13 1.2L15 3L13 4.8" fill="none" stroke="#7c7c7c" stroke-width="1.2"/><path d="M2 9.5H10V6.5L15.5 9.5L10 12.5V9.5" fill="#7c7c7c" stroke="#7c7c7c" stroke-width="1"/></svg>
<div class="abs sep" style="top:381px"></div>
<div class="abs lbl" style="left:-46px;top:396px">Profile:</div>
<div class="abs" style="left:80px;top:391px;width:127px;height:24px;background:#3b3b3b;border-radius:2px;box-shadow:0 0 0 1px #565656"></div>
<div class="abs" style="left:80px;top:391px;width:106px;height:24px;background:#e9e9e9;border-radius:2px 0 0 2px"></div>
<div class="abs" style="left:88px;top:403.5px;width:45px;height:2.6px;background:#111"></div>
<div class="abs" style="left:139px;top:397px;font-size:12px;color:#222;line-height:16px">Uniform</div>
<svg class="abs" style="left:192px;top:399px" width="10" height="8" viewBox="0 0 10 8"><path d="M1.2 1.8L5 5.6L8.8 1.8" fill="none" stroke="#e8e8e8" stroke-width="1.8"/></svg>
<svg class="abs" style="left:220px;top:394px" width="18" height="18" viewBox="0 0 18 18"><path d="M1.5 4L7 9L1.5 14Z" fill="none" stroke="#707070" stroke-width="1.2"/><path d="M16.5 4L11 9L16.5 14Z" fill="#707070"/><path d="M9 1V17" stroke="#707070" stroke-width="1" stroke-dasharray="2 1.5"/></svg>
<svg class="abs" style="left:249px;top:393px" width="18" height="20" viewBox="0 0 18 20"><path d="M3.5 1.5H14.5L9 7Z" fill="#707070"/><path d="M3.5 18.5H14.5L9 13Z" fill="none" stroke="#707070" stroke-width="1.2"/><path d="M1 10H17" stroke="#707070" stroke-width="1"/></svg>
</div></div>
</body></html>
